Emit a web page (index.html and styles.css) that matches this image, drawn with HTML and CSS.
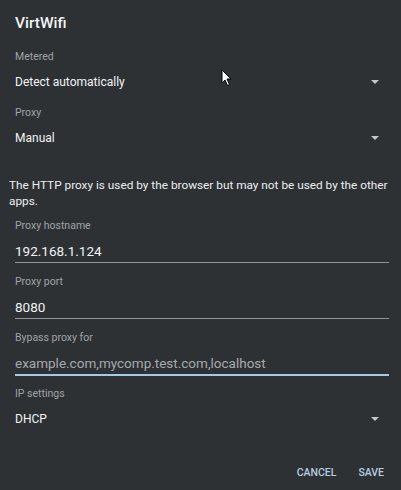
FILE: index.html
```html
<!DOCTYPE html>
<html>
<head>
<meta charset="utf-8">
<link rel="stylesheet" href="styles.css">
</head>
<body>
<div class="dialog">
  <h1 class="title">VirtWifi</h1>
  <div class="field">
    <div class="label">Metered</div>
    <div class="select"><span>Detect automatically</span><span class="arrow"></span></div>
  </div>
  <div class="field">
    <div class="label">Proxy</div>
    <div class="select"><span>Manual</span><span class="arrow"></span></div>
  </div>
  <p class="note">The HTTP proxy is used by the browser but may not be used by the other apps.</p>
  <div class="field">
    <div class="label">Proxy hostname</div>
    <div class="input">192.168.1.124</div>
  </div>
  <div class="field">
    <div class="label">Proxy port</div>
    <div class="input">8080</div>
  </div>
  <div class="field">
    <div class="label">Bypass proxy for</div>
    <div class="input hint focused">example.com,mycomp.test.com,localhost</div>
  </div>
  <div class="field">
    <div class="label">IP settings</div>
    <div class="select"><span>DHCP</span><span class="arrow"></span></div>
  </div>
  <div class="actions">
    <span class="btn">CANCEL</span>
    <span class="btn">SAVE</span>
  </div>
  <svg class="cursor" width="12" height="18" viewBox="0 0 12 18">
    <path d="M1 1 L1 14 L4 11 L6.5 16.5 L8.5 15.5 L6 10 L10 10 Z" fill="#fff" stroke="#000" stroke-width="1"/>
  </svg>
</div>
</body>
</html>
```
FILE: styles.css
```css
html, body {
  margin: 0;
  padding: 0;
  background: #2e3134;
}
.dialog {
  position: relative;
  width: 401px;
  height: 490px;
  box-sizing: border-box;
  padding: 0 12px 0 15px;
  font-family: Roboto, "Liberation Sans", sans-serif;
  color: #e8eaed;
}
.title {
  margin: 0;
  height: 49px;
  box-sizing: border-box;
  padding-top: 12px;
  font-size: 15.5px;
  line-height: 22px;
  font-weight: 500;
  color: #f1f3f4;
}
.field {
  height: 56px;
}
.label {
  height: 16px;
  line-height: 16px;
  font-size: 10.5px;
  color: #a0a3a6;
}
.select, .input {
  margin-top: 6px;
  height: 22px;
  line-height: 22px;
  color: #f1f3f4;
}
.select {
  font-size: 12px;
  display: flex;
  justify-content: space-between;
  align-items: center;
}
.input {
  font-size: 13.5px;
  border-bottom: 1px solid #919497;
}
.arrow {
  width: 0;
  height: 0;
  margin-right: 10px;
  border-left: 4px solid transparent;
  border-right: 4px solid transparent;
  border-top: 4px solid #c4c7ca;
}
.input.hint {
  color: #a6a9ac;
}
.input.focused {
  border-bottom: 2px solid #a8c8e8;
}
.note {
  margin: 0 -12px 0 -6px;
  height: 57px;
  box-sizing: border-box;
  padding-top: 16px;
  font-size: 11.8px;
  line-height: 16px;
  color: #eceef0;
}
.actions {
  display: flex;
  justify-content: flex-end;
  gap: 22px;
  padding-right: 5px;
  margin-top: 23px;
}
.btn {
  font-size: 10.5px;
  font-weight: 500;
  line-height: 16px;
  color: #b4cde3;
}
.cursor {
  position: absolute;
  left: 221px;
  top: 69px;
}
```
